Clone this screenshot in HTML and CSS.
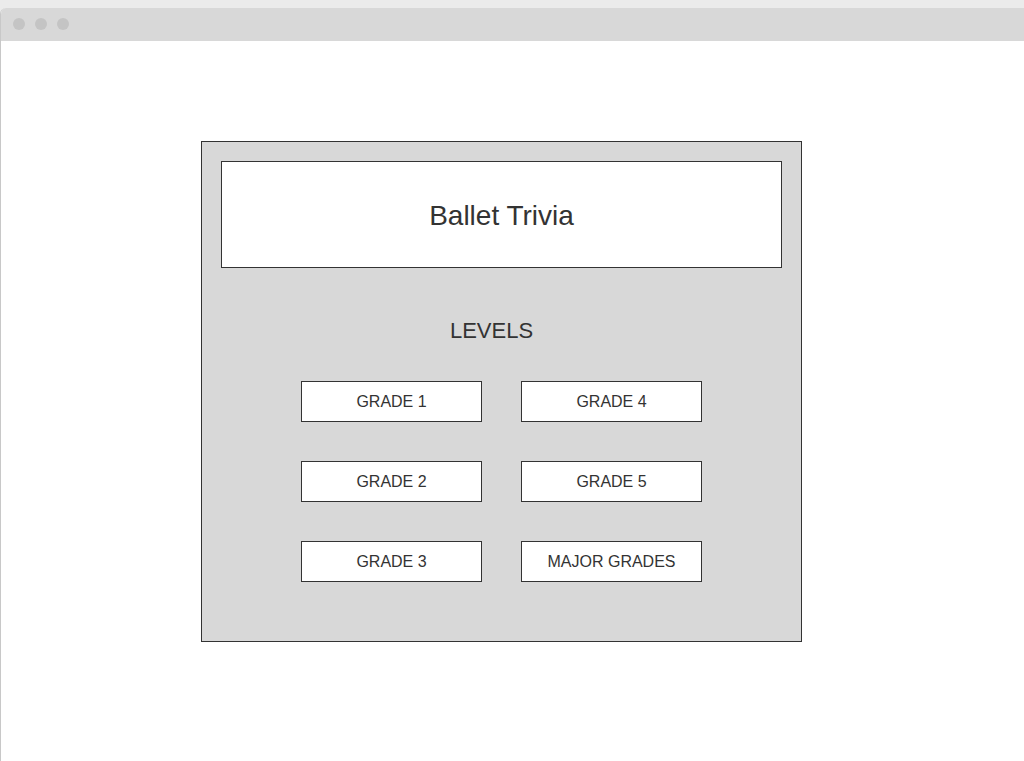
FILE: index.html
```html
<!DOCTYPE html>
<html lang="en">

<head>
    <meta charset="UTF-8">
    <meta name="viewport" content="width=device-width, initial-scale=1.0">
    <title>Ballet Trivia</title>
    <link rel="stylesheet" href="styles.css">
</head>

<body>
    <div class="window">
        <div class="titlebar">
            <span class="dot"></span>
            <span class="dot"></span>
            <span class="dot"></span>
        </div>

        <div class="content">
            <div class="panel">
                <div class="header">Ballet Trivia</div>

                <h2 class="levels">LEVELS</h2>

                <div class="grades">
                    <button class="grade">GRADE 1</button>
                    <button class="grade">GRADE 4</button>
                    <button class="grade">GRADE 2</button>
                    <button class="grade">GRADE 5</button>
                    <button class="grade">GRADE 3</button>
                    <button class="grade">MAJOR GRADES</button>
                </div>
            </div>
        </div>
    </div>
</body>

</html>
```

FILE: styles.css
```css
html,
body {
    margin: 0;
    height: 100%;
}

body {
    font-family: "Liberation Sans", Arial, sans-serif;
    color: #333;
    background-color: #ebebeb;
    padding-top: 8px;
    box-sizing: border-box;
    overflow: hidden;
}

.window {
    height: 100%;
    background-color: #fff;
    border-left: 1px solid #c8c8c8;
    border-radius: 6px 0 0 0;
    overflow: hidden;
}

.titlebar {
    height: 33px;
    background-color: #d8d8d8;
    display: flex;
    align-items: center;
    gap: 10px;
    padding-left: 12px;
    padding-bottom: 1px;
    box-sizing: border-box;
}

.dot {
    width: 12px;
    height: 12px;
    border-radius: 50%;
    background-color: #c4c4c4;
}

.content {
    padding: 100px 0 0 200px;
}

.panel {
    width: 601px;
    height: 501px;
    box-sizing: border-box;
    border: 1px solid #333;
    background-color: #d8d8d8;
    padding: 19px;
}

.header {
    height: 107px;
    box-sizing: border-box;
    border: 1px solid #333;
    background-color: #fff;
    display: flex;
    align-items: center;
    justify-content: center;
    font-size: 28px;
    padding-top: 2px;
}

.levels {
    margin: 50px 0 0 -20px;
    font-size: 22px;
    font-weight: normal;
    line-height: 26px;
    text-align: center;
}

.grades {
    margin-top: 37px;
    display: grid;
    grid-template-columns: 181px 181px;
    grid-auto-rows: 41px;
    gap: 39px;
    justify-content: center;
}

.grade {
    font-family: inherit;
    font-size: 16px;
    color: #333;
    background-color: #fff;
    border: 1px solid #333;
    padding: 0;
    cursor: pointer;
}
```
